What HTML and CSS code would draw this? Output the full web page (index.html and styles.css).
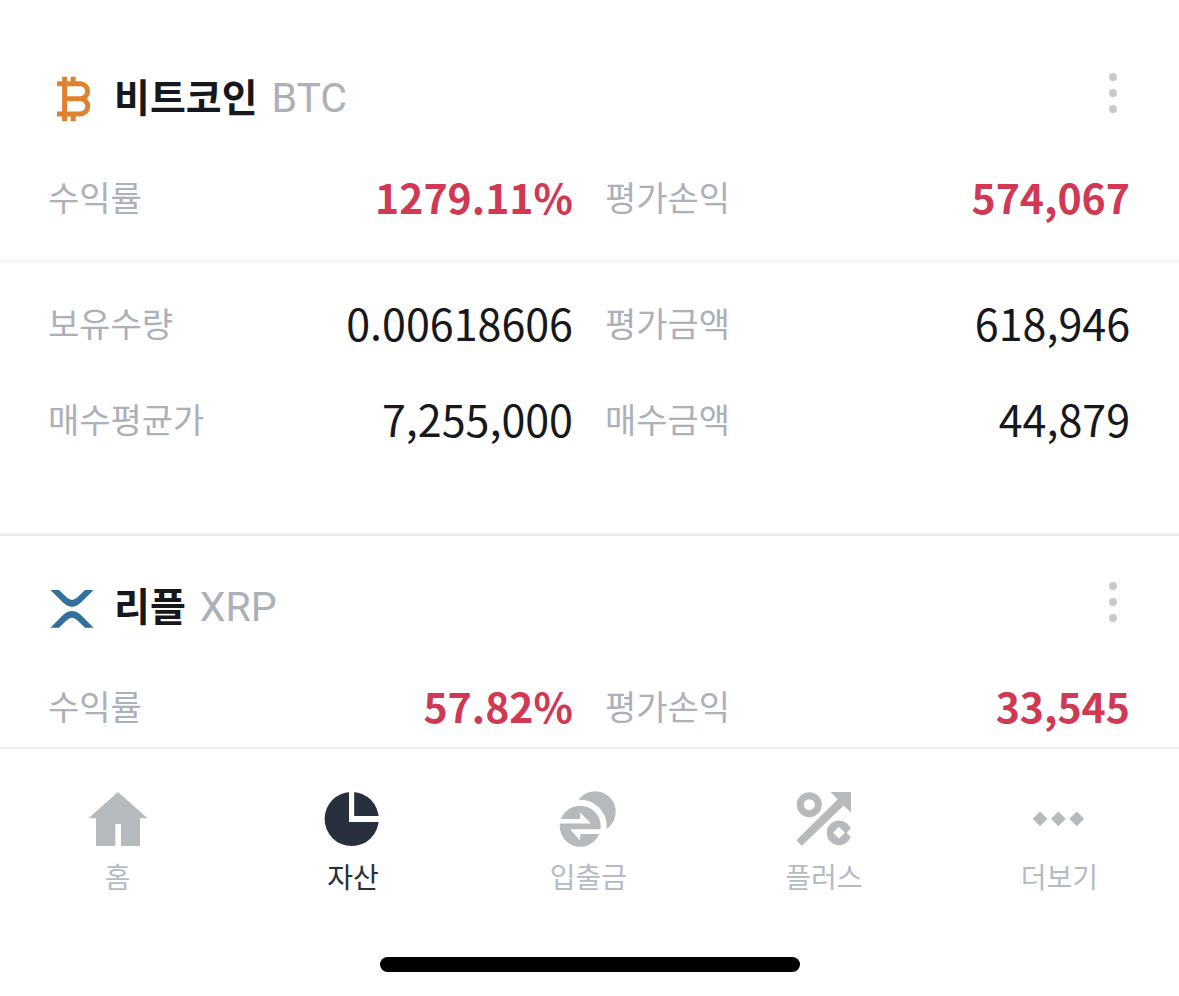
FILE: index.html
```
<!DOCTYPE html>
<html lang="ko">
<head>
<meta charset="UTF-8" />
<meta name="viewport" content="width=device-width, initial-scale=1" />
<title>자산</title>
<link rel="stylesheet" href="styles.css">
</head>
<body>

  <main class="assets">

    <section class="asset">
      <header class="asset-head">
        <svg class="coin" viewBox="0 0 48 48" aria-hidden="true">
          <g fill="none" stroke="#df822f" stroke-width="5">
            <path d="M9 8.8H32.2a7.4 7.4 0 0 1 0 14.9H16.5M32.2 23.7a7.6 7.6 0 0 1 0 15.2H9" />
            <path d="M16.6 1.7V46.3M25.2 1.7V8.8M25.2 38.9V46.3" />
          </g>
        </svg>
        <h2 class="name">비트코인 <span class="ticker">BTC</span></h2>
        <button class="more" type="button" aria-label="메뉴"><i></i><i></i><i></i></button>
      </header>
      <dl class="stats profit">
        <div class="stat"><dt>수익률</dt><dd>1279.11%</dd></div>
        <div class="stat"><dt>평가손익</dt><dd>574,067</dd></div>
      </dl>
      <dl class="stats detail">
        <div class="stat"><dt>보유수량</dt><dd>0.00618606</dd></div>
        <div class="stat"><dt>평가금액</dt><dd>618,946</dd></div>
        <div class="stat"><dt>매수평균가</dt><dd>7,255,000</dd></div>
        <div class="stat"><dt>매수금액</dt><dd>44,879</dd></div>
      </dl>
    </section>

    <section class="asset">
      <header class="asset-head">
        <svg class="coin" viewBox="0 0 48 48" aria-hidden="true">
          <g fill="#30709c">
            <path d="M2.4 6H11L18.5 13.2Q24 18.6 29.5 13.2L37 6H45.6L33 18.6Q24 27 15 18.6Z" />
            <path d="M2.4 43.7H11L18.5 36.5Q24 31.1 29.5 36.5L37 43.7H45.6L33 31.1Q24 22.7 15 31.1Z" />
          </g>
        </svg>
        <h2 class="name">리플 <span class="ticker">XRP</span></h2>
        <button class="more" type="button" aria-label="메뉴"><i></i><i></i><i></i></button>
      </header>
      <dl class="stats profit">
        <div class="stat"><dt>수익률</dt><dd>57.82%</dd></div>
        <div class="stat"><dt>평가손익</dt><dd>33,545</dd></div>
      </dl>
    </section>

  </main>

  <nav class="tabbar">
    <div class="tabs">
      <a class="tab" href="#home">
        <svg viewBox="0 0 60 60" aria-hidden="true">
          <path d="M30 3L59.5 29.3H52V57H33V35H27.3V57H8V29.3H0.5Z" />
        </svg>
        <span>홈</span>
      </a>
      <a class="tab active" href="#assets">
        <svg viewBox="0 0 60 60" aria-hidden="true">
          <circle cx="28.7" cy="30" r="27.1" />
          <path class="cut" d="M26 0H31.2V27H60V33H26Z" />
        </svg>
        <span>자산</span>
      </a>
      <a class="tab" href="#transfer">
        <svg viewBox="0 0 60 60" aria-hidden="true">
          <circle cx="37.2" cy="22.7" r="20.5" />
          <circle class="cut" cx="22.2" cy="37.2" r="26.5" />
          <circle cx="22.2" cy="37.2" r="20.5" />
          <path class="cut" d="M0 30H22.2V23.5L33 34.6H0Z" />
          <path class="cut" d="M12 40.3H43V45H22.2V51.5Z" />
        </svg>
        <span>입출금</span>
      </a>
      <a class="tab" href="#plus">
        <svg viewBox="0 0 60 60" aria-hidden="true">
          <circle class="ring" cx="15.3" cy="15.7" r="9" />
          <path d="M36.4 3H57V23.7L49.7 16.6L7.9 56.8L2.4 51.2L43.8 10.3Z" />
          <circle cx="45" cy="43.7" r="12.3" />
          <path class="cut" d="M45 37.8L50.9 43.7L45 49.6L39.1 43.7Z" />
          <path class="cut" d="M52.5 43.7L60 36.2V51.2Z" />
        </svg>
        <span>플러스</span>
      </a>
      <a class="tab" href="#more">
        <svg viewBox="0 0 60 60" aria-hidden="true">
          <path d="M11 22.4L18.4 29.8L11 37.2L3.6 29.8ZM29.4 22.4L36.8 29.8L29.4 37.2L22 29.8ZM47.8 22.4L55.2 29.8L47.8 37.2L40.4 29.8Z" />
        </svg>
        <span>더보기</span>
      </a>
    </div>
    <div class="home-bar"></div>
  </nav>

</body>
</html>
```
FILE: styles.css
```
* {
  box-sizing: border-box;
}

body {
  margin: 0;
  height: 100vh;
  display: flex;
  flex-direction: column;
  background: #fff;
  color: #17181c;
  font-family: 'Noto Sans CJK KR', sans-serif;
}

.assets {
  flex: 1;
  min-height: 0;
  overflow: hidden;
  padding-top: 27px;
}

.asset {
  padding-top: 42px;
}

.asset + .asset {
  border-top: 3px solid #eeeef6;
}

.asset-head {
  display: flex;
  align-items: center;
  gap: 18px;
  height: 60px;
  padding: 0 49px 0 48px;
}

.coin {
  width: 48px;
  height: 48px;
}

.name {
  flex: 1;
  margin: 0;
  padding-bottom: 6px;
  font-size: 39px;
  line-height: 60px;
  font-weight: 700;
}

.ticker {
  margin-left: 3px;
  font-family: Roboto, 'Noto Sans CJK KR', sans-serif;
  font-size: 41px;
  font-weight: 400;
  color: #abb0ba;
}

.more {
  align-self: flex-start;
  display: flex;
  flex-direction: column;
  align-items: center;
  justify-content: center;
  gap: 8px;
  width: 34px;
  height: 48px;
  padding: 0;
  border: 0;
  background: none;
}

.more i {
  width: 8px;
  height: 8px;
  border-radius: 50%;
  background: #c8c8d0;
}

.stats {
  display: grid;
  grid-template-columns: 1fr 1fr;
  column-gap: 32px;
  margin: 0;
  padding: 0 49px 0 48px;
}

.stat {
  display: flex;
  align-items: center;
  justify-content: space-between;
  height: 96px;
  padding-bottom: 6px;
}

.stat dt {
  font-size: 34px;
  font-weight: 400;
  color: #abb0ba;
}

.stat dd {
  margin: 0;
  font-size: 43px;
}

.profit {
  margin-top: 22px;
}

.profit dd {
  font-size: 41px;
  font-weight: 700;
  color: #d13853;
}

.detail {
  margin-top: 12px;
  padding-top: 14px;
  padding-bottom: 64px;
  border-top: 4px solid #f8f8fa;
}

/* Barra inferior */
.tabbar {
  padding: 40px 0 24px;
  border-top: 2px solid #ececf6;
  background: #fff;
}

.tabs {
  display: grid;
  grid-template-columns: repeat(5, 1fr);
  padding-right: 2px;
}

.tab {
  display: flex;
  flex-direction: column;
  align-items: center;
  gap: 9px;
  color: #b4bac6;
  font-size: 28px;
  line-height: 36px;
  text-decoration: none;
}

.tab svg {
  width: 60px;
  height: 60px;
  fill: #b6babc;
}

.tab.active {
  color: #29303d;
}

.tab.active svg {
  fill: #29303d;
}

.tab .cut {
  fill: #fff;
}

.tab .ring {
  fill: none;
  stroke: #b6babc;
  stroke-width: 7;
}

.home-bar {
  width: 420px;
  max-width: 60%;
  height: 15px;
  margin: 63px auto 0;
  border-radius: 8px;
  background: #000;
}
```
